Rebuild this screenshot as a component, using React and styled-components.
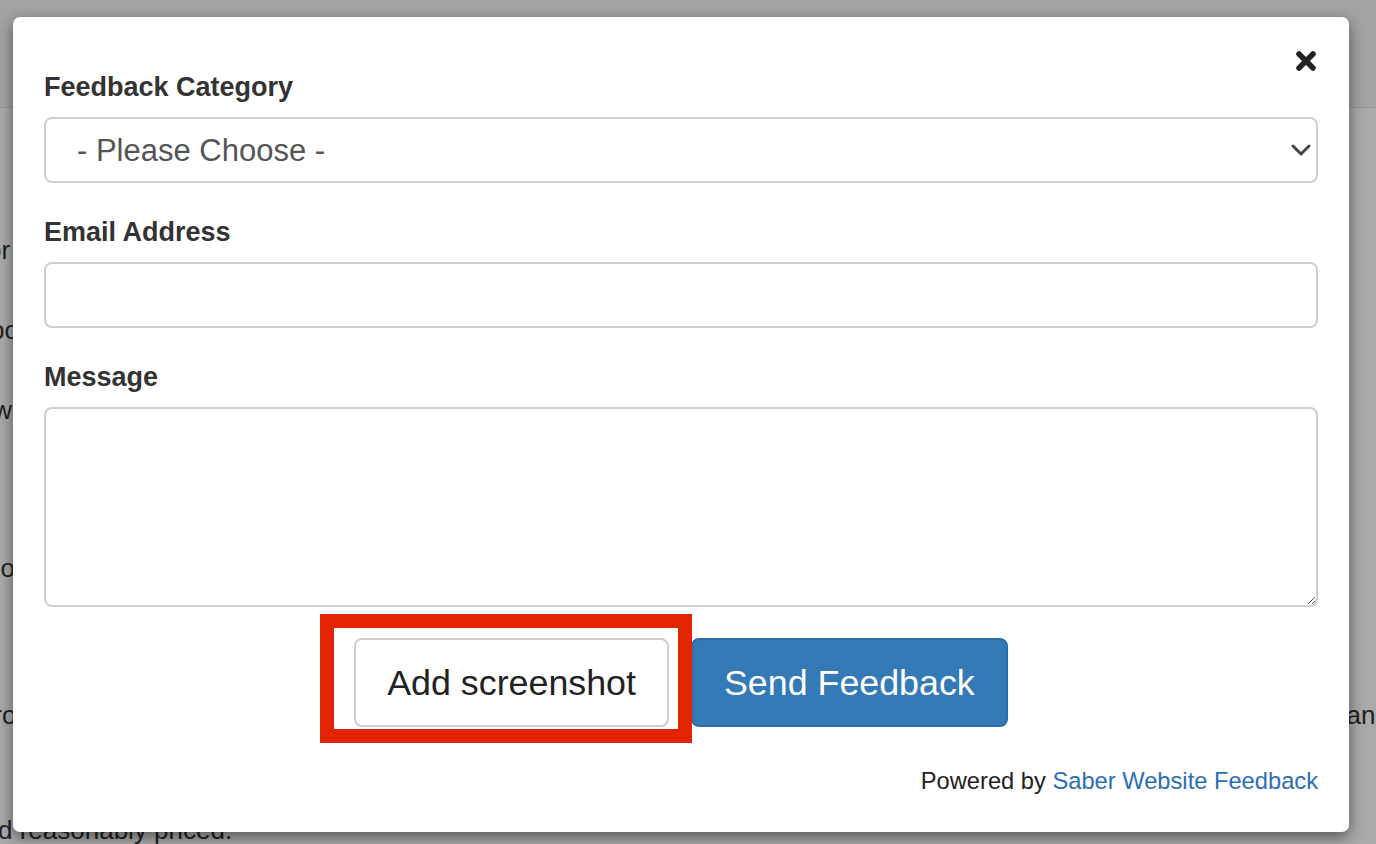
import React from 'react';
import styled, { createGlobalStyle } from "styled-components";

const GlobalStyle = createGlobalStyle`
  html, body {
    margin: 0;
    padding: 0;
    width: 1376px;
    height: 844px;
    overflow: hidden;
    font-family: "Liberation Sans", Arial, Helvetica, sans-serif;
  }
  * { box-sizing: border-box; }
`;

// ---- page behind the modal ----
const Page = styled.div`
  position: relative;
  width: 1376px;
  height: 844px;
  overflow: hidden;
  background: #fff;
  color: #333;
  font-size: 26px;
`;

const Header = styled.div`
  height: 108px;
  background: #f7f7f7;
  border-bottom: 1px solid #e2e2e2;
`;

const Content = styled.div`
  display: flex;
  flex-direction: column;
`;

const Line = styled.div`
  display: flex;
  justify-content: space-between;
  white-space: nowrap;
  line-height: 30px;
  margin-top: ${({ top }) => top}px;
  margin-left: ${({ shift }) => shift || 0}px;
  margin-right: -14px;
`;

const Overlay = styled.div`
  position: absolute;
  inset: 0;
  background: rgba(0, 0, 0, 0.335);
`;

// ---- modal ----
const Modal = styled.div`
  position: absolute;
  left: 13px;
  top: 17px;
  width: 1336px;
  background: #fff;
  border-radius: 7px;
  box-shadow: 0 5px 15px rgba(0, 0, 0, 0.5);
  padding: 54px 31px 36px 31px;
  color: #333;
`;

const Close = styled.button`
  position: absolute;
  top: 32px;
  right: 31px;
  width: 24px;
  height: 24px;
  padding: 0;
  border: 0;
  background: none;
  display: flex;
  align-items: center;
  justify-content: center;
`;

const FormGroup = styled.div`
  display: flex;
  flex-direction: column;
  margin-bottom: 33px;
`;

const Label = styled.label`
  font-size: 27px;
  font-weight: 700;
  line-height: 33px;
  margin-bottom: 13px;
  color: #333;
`;

const SelectWrap = styled.div`
  position: relative;
  height: 66px;
`;

const Select = styled.select`
  appearance: none;
  -webkit-appearance: none;
  width: 100%;
  height: 66px;
  border: 2px solid #cfcfcf;
  border-radius: 8px;
  background: #fff;
  padding: 0 30px 0 31px;
  font-family: "Liberation Sans", Arial, sans-serif;
  font-size: 31px;
  color: #555;
  outline: none;
`;

const Chevron = styled.svg`
  position: absolute;
  right: 7px;
  top: 27px;
  pointer-events: none;
`;

const Input = styled.input`
  width: 100%;
  height: 66px;
  border: 2px solid #cfcfcf;
  border-radius: 8px;
  padding: 0 24px;
  font-family: "Liberation Sans", Arial, sans-serif;
  font-size: 28px;
  outline: none;
`;

const TextArea = styled.textarea`
  width: 100%;
  height: 200px;
  border: 2px solid #cfcfcf;
  border-radius: 8px;
  padding: 12px 24px;
  font-family: "Liberation Sans", Arial, sans-serif;
  font-size: 28px;
  resize: vertical;
  outline: none;
  display: block;
`;

const Actions = styled.div`
  display: flex;
  justify-content: center;
  gap: 22px;
  margin-top: -2px;
`;

const Highlight = styled.div`
  position: relative;
  display: flex;
  &::after {
    content: "";
    position: absolute;
    left: -34px;
    right: -23px;
    top: -24px;
    bottom: -16px;
    border: 14px solid #e22500;
    pointer-events: none;
  }
`;

const Button = styled.button`
  height: 89px;
  padding: 0 31px;
  border-radius: 8px;
  font-family: "Liberation Sans", Arial, sans-serif;
  font-size: 35.8px;
  line-height: 48px;
  cursor: pointer;
  border: 2px solid ${({ primary }) => (primary ? "#2e6da4" : "#cfcfcf")};
  background: ${({ primary }) => (primary ? "#337ab7" : "#fff")};
  color: ${({ primary }) => (primary ? "#fff" : "#222")};
`;

const Footer = styled.div`
  margin-top: 40px;
  text-align: right;
  font-size: 23.7px;
  line-height: 29px;
  color: #222;
`;

const FooterLink = styled.a`
  color: #2a6fb5;
  text-decoration: none;
`;

const App = () => {
  return (
    <>
      <GlobalStyle />
      <Page>
        <Header />
        <Content>
          <Line top={127} shift={-13}>or</Line>
          <Line top={50} shift={-10}>pos</Line>
          <Line top={50} shift={-14}>two</Line>
          <Line top={128} shift={-14}>goo</Line>
          <Line top={117} shift={-14}><span>fro</span><span>cand</span></Line>
          <Line top={85} shift={-2}>d reasonably priced.</Line>
        </Content>
        <Overlay />
        <Modal>
          <Close aria-label="Close">
            <svg width="22" height="22" viewBox="0 0 22 22">
              <path d="M4 4 L18 18 M18 4 L4 18" stroke="#222" strokeWidth="5.5" strokeLinecap="round" />
            </svg>
          </Close>

          <FormGroup>
            <Label>Feedback Category</Label>
            <SelectWrap>
              <Select defaultValue="">
                <option value="">- Please Choose -</option>
              </Select>
              <Chevron width="20" height="12" viewBox="0 0 20 12">
                <path d="M2 2 L10 10 L18 2" fill="none" stroke="#444" strokeWidth="3" strokeLinecap="round" strokeLinejoin="round" />
              </Chevron>
            </SelectWrap>
          </FormGroup>

          <FormGroup>
            <Label>Email Address</Label>
            <Input type="email" />
          </FormGroup>

          <FormGroup>
            <Label>Message</Label>
            <TextArea />
          </FormGroup>

          <Actions>
            <Highlight>
              <Button>Add screenshot</Button>
            </Highlight>
            <Button primary>Send Feedback</Button>
          </Actions>

          <Footer>
            Powered by <FooterLink href="#">Saber Website Feedback</FooterLink>
          </Footer>
        </Modal>
      </Page>
    </>
  );
};

export default App;
